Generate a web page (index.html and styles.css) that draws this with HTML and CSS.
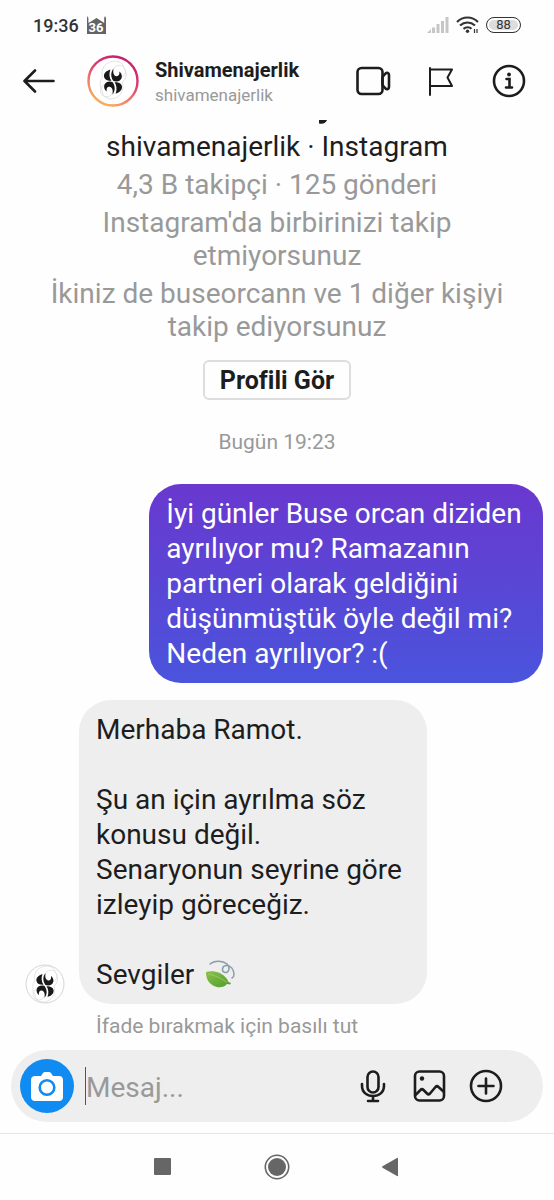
FILE: index.html
```html
<!DOCTYPE html>
<html lang="tr">
<head>
<meta charset="utf-8">
<meta name="viewport" content="width=device-width, initial-scale=1">
<title>Shivamenajerlik</title>
<link rel="stylesheet" href="styles.css">
</head>
<body>
<svg class="defs" aria-hidden="true">
  <defs>
    <linearGradient id="ring" x1="0.75" y1="0" x2="0.25" y2="1">
      <stop offset="0" stop-color="#c51b6b"/>
      <stop offset="0.4" stop-color="#dc3f72"/>
      <stop offset="0.75" stop-color="#f18a62"/>
      <stop offset="1" stop-color="#f8b65a"/>
    </linearGradient>
    <linearGradient id="leaf" x1="0" y1="0" x2="1" y2="1">
      <stop offset="0" stop-color="#8bc34a"/>
      <stop offset="1" stop-color="#4f9a2c"/>
    </linearGradient>
    <symbol id="logo" viewBox="0 0 40 40">
      <g fill="none" stroke="#ddd" stroke-width="0.800">
        <path d="M10 31c-3-5-3-10 0-14-2-7 2-14 11-15 6 0 9 3 9 6 4 5 3 11-1 14 2 8-2 15-10 16-6 0-9-3-9-7z"/>
        <circle cx="26" cy="12" r="6"/>
        <circle cx="14" cy="30" r="6"/>
      </g>
      <g id="half" fill="#191919">
        <path d="M17.500 10C12.500 11.500 11 14.500 11.500 17c0.500 3 3.500 4 7 3.800C16.500 18 16 14 17.500 10z"/>
        <path d="M20.500 9c-0.800 3.500 0 6.500 2 7.300 2.500 0.900 4.200-1.300 3.500-4.300 3 2 3.300 6.500 0.500 8.500-1.800 1.200-4.300 1.200-6 0.500C17.800 17.500 17.500 12.500 20.500 9z"/>
      </g>
      <use href="#half" transform="rotate(180 20 21.500)"/>
    </symbol>
  </defs>
</svg>
<div class="screen">
  <div class="status">
    <span class="clock">19:36</span>
    <svg class="mosque" viewBox="0 0 19 18" role="img" aria-label="36">
      <path d="M0 18V2L0.600 0l0.800 2v5L4 5.500 9.500 2l5.500 3.500 2.200 1.500V2l0.800-2 1 2v16z" fill="#646464"/>
      <text x="9" y="16" text-anchor="middle" class="mosque-text">36</text>
    </svg>
    <span class="spacer"></span>
    <svg class="signal" viewBox="0 0 22 16" fill="#c6c6c6" aria-hidden="true"><path d="M0 16l4-4V16zM5 10.500h3V16H5zM9.500 7h3v9h-3zM14 4h3v12h-3zM18.500 0h3v16h-3z"/></svg>
    <svg class="wifi" viewBox="0 0 24 18" fill="none" stroke="#333" stroke-width="2.200" aria-hidden="true">
      <path d="M1 6c6-6 15-6 21 0M4 9.500c4.500-4 10.500-4 15 0M7.500 12.800c2.500-2 6-2 8 0"/>
      <circle cx="11.500" cy="15.300" r="1.700" fill="#333" stroke="none"/>
      <path d="M18.500 13v4M21 13v4" stroke-width="1.200"/>
    </svg>
    <span class="battery">88</span>
  </div>

  <header class="header">
    <button class="icon-button back" aria-label="Geri">
      <svg width="32" height="26" viewBox="0 0 32 26" fill="none" stroke="#1d1d1d" stroke-width="2.600" stroke-linecap="round" stroke-linejoin="round"><path d="M30.500 13H2M12 2.500L1.500 13 12 23.500"/></svg>
    </button>
    <svg class="avatar-large" viewBox="0 0 52 52" role="img" aria-label="Shivamenajerlik">
      <circle cx="26" cy="26" r="24.500" fill="#fff" stroke="url(#ring)" stroke-width="2.400"/>
      <use href="#logo" x="5" y="4" width="42" height="42"/>
    </svg>
    <div class="names">
      <h1 class="title">Shivamenajerlik</h1>
      <span class="handle">shivamenajerlik</span>
    </div>
    <button class="icon-button" aria-label="Görüntülü ara">
      <svg width="36" height="34" viewBox="0 0 36 34" fill="none" stroke="#1d1d1d" stroke-width="2.600" stroke-linejoin="round"><rect x="2.500" y="4" width="25" height="26" rx="4"/><path d="M27.500 13l3-3.500c1.500-1.200 3.500-0.500 3.500 1.500v12c0 2-2 2.700-3.500 1.500l-3-3.500z"/></svg>
    </button>
    <button class="icon-button" aria-label="İşaretle">
      <svg width="36" height="34" viewBox="0 0 36 34" fill="none" stroke="#1d1d1d" stroke-width="2" stroke-linecap="round" stroke-linejoin="round"><path d="M7 31V4M7 5.500h22l-4.500 8 4.500 8.500H7"/></svg>
    </button>
    <button class="icon-button" aria-label="Bilgi">
      <svg width="36" height="34" viewBox="0 0 36 34" fill="none" stroke="#1d1d1d" stroke-width="2.600" stroke-linecap="round"><circle cx="18" cy="17" r="15"/><path d="M15.500 15H18.500V23.500M15 23.500h6"/><circle cx="18" cy="10.500" r="1.900" fill="#1d1d1d" stroke="none"/></svg>
    </button>
  </header>

  <main class="thread">
    <section class="profile">
      <svg class="tail" viewBox="0 0 554 5" aria-hidden="true"><path d="M319 0h8c-1.200 3-3.500 4.200-8 3.500z" fill="#1d1d1d"/></svg>
      <p class="account">shivamenajerlik · Instagram</p>
      <p>4,3 B takipçi · 125 gönderi</p>
      <p>Instagram'da birbirinizi takip<br>etmiyorsunuz</p>
      <p>İkiniz de buseorcann ve 1 diğer kişiyi<br>takip ediyorsunuz</p>
      <button class="profile-button">Profili Gör</button>
    </section>
    <time class="date">Bugün 19:23</time>
    <p class="bubble sent">İyi günler Buse orcan diziden ayrılıyor mu? Ramazanın partneri olarak geldiğini düşünmüştük öyle değil mi? Neden ayrılıyor? :(</p>
    <div class="received-row">
      <svg class="avatar-small" viewBox="0 0 40 40" role="img" aria-label="Shivamenajerlik"><circle cx="20" cy="20" r="19" fill="#fff" stroke="#d4d4d4"/><use href="#logo" x="0" y="0" width="40" height="40"/></svg>
      <p class="bubble received">Merhaba Ramot.<br><br>Şu an için ayrılma söz konusu değil.<br>Senaryonun seyrine göre izleyip göreceğiz.<br><br>Sevgiler <svg class="leaf" viewBox="0 0 30 28" role="img" aria-label="yaprak"><path d="M1 12c6-2 16-0.500 21 7l1.500 3 2.500 1-1 1.500-3-0.500c-3 3.500-9 4.500-14 1.500-5-3-7-7.500-7-13.500z" fill="url(#leaf)"/><path d="M3 14c6 1 13 4 19 8.500" fill="none" stroke="#a5d36b" stroke-width="0.700"/><path d="M5 4C9 0.500 17 0 22 4c4 4 1.500 9-2 8.500-3.500-0.500-3.500-6.500 1-7C26 5 29 10 29 14.500c0 2-1 3-2 3.500" fill="none" stroke="#8a9fab" stroke-width="1.500" stroke-linecap="round"/></svg></p>
    </div>
    <p class="hint">İfade bırakmak için basılı tut</p>
  </main>

  <form class="composer">
    <button type="button" class="camera" aria-label="Kamera">
      <svg width="32" height="30" viewBox="0 0 32 30"><path d="M4 5h6l2-3c0.700-1 1.500-1 2.500-1h3c1 0 1.800 0 2.500 1l2 3h6c2.500 0 4 1.500 4 4v17c0 2.500-1.500 4-4 4H4c-2.500 0-4-1.500-4-4V9c0-2.500 1.500-4 4-4z" fill="#fff"/><circle cx="16" cy="16.500" r="7.300" fill="none" stroke="#0f8bf2" stroke-width="2.600"/></svg>
    </button>
    <input class="message" type="text" placeholder="Mesaj..." aria-label="Mesaj">
    <button type="button" class="icon-button" aria-label="Ses kaydı">
      <svg width="36" height="36" viewBox="0 0 36 36" fill="none" stroke="#1d1d1d" stroke-width="2.600" stroke-linecap="round"><rect x="11.500" y="3.500" width="11" height="21" rx="5.500"/><path d="M6 16v1.500c0 7 5 10.500 11 10.500s11-3.500 11-10.500V16M17 28v5M12 33h10"/></svg>
    </button>
    <button type="button" class="icon-button" aria-label="Galeri">
      <svg width="36" height="36" viewBox="0 0 36 36" fill="none" stroke="#1d1d1d" stroke-width="2.600" stroke-linejoin="round"><rect x="3" y="3.500" width="29" height="29" rx="4.500"/><path d="M3.500 27l5-5c1-1 2-1 3 0l3.500 3.500c1 1 2 1 3 0L23.500 19c1-1 2-1 3 0l5.500 5"/><circle cx="10" cy="10.500" r="2.200" fill="#1d1d1d" stroke="none"/></svg>
    </button>
    <button type="button" class="icon-button" aria-label="Ekle">
      <svg width="36" height="36" viewBox="0 0 36 36" fill="none" stroke="#1d1d1d" stroke-width="2.600" stroke-linecap="round"><circle cx="18" cy="18" r="15"/><path d="M18 10.500v15M10.500 18h15"/></svg>
    </button>
  </form>

  <nav class="system" aria-label="Sistem">
    <button class="icon-button" aria-label="Son uygulamalar"><svg width="28" height="28" viewBox="0 0 28 28"><rect x="5" y="5" width="17" height="17" rx="1" fill="#666"/></svg></button>
    <button class="icon-button" aria-label="Ana ekran"><svg width="28" height="28" viewBox="0 0 28 28"><circle cx="14" cy="14" r="11.700" fill="none" stroke="#666" stroke-width="1.600"/><circle cx="14" cy="14" r="9" fill="#666"/></svg></button>
    <button class="icon-button" aria-label="Geri"><svg width="28" height="28" viewBox="0 0 28 28"><path d="M5.500 13.300L20 5q1-0.500 1 0.500v17q0 1-1 0.500L5.500 14.700q-1-0.700 0-1.400z" fill="#666"/></svg></button>
  </nav>
</div>
</body>
</html>
```

FILE: styles.css
```css
* {
  box-sizing: border-box;
}

body {
  margin: 0;
  background: #fefefe;
  color: #1d1d1d;
  font-family: Roboto, "Liberation Sans", sans-serif;
}

p,
h1 {
  margin: 0;
}

button {
  padding: 0;
  border: 0;
  background: none;
  color: inherit;
  font-family: inherit;
}

svg {
  display: block;
}

.defs {
  position: absolute;
  width: 0;
  height: 0;
}

.screen {
  display: flex;
  flex-direction: column;
  min-height: 100vh;
}

.status {
  display: flex;
  align-items: center;
  height: 50px;
  padding: 0 33px;
}

.clock {
  font-size: 18px;
  font-weight: 500;
  color: #333;
}

.mosque {
  width: 19px;
  height: 18px;
  margin-left: 8px;
}

.mosque-text {
  font-size: 13px;
  font-weight: 700;
  fill: #fff;
}

.spacer {
  flex: 1;
}

.signal {
  width: 22px;
  height: 16px;
}

.wifi {
  width: 24px;
  height: 18px;
  margin: 0 6px 0 7px;
}

.battery {
  width: 35px;
  border: 1px solid #333;
  border-radius: 8px;
  box-shadow: inset 0 0 0 2px #fff;
  background: #ddd;
  color: #333;
  font-size: 13px;
  line-height: 14px;
  text-align: center;
}

.header {
  display: flex;
  align-items: center;
  gap: 32px;
  height: 62px;
  padding: 0 27px 0 23px;
}

.icon-button {
  flex: none;
}

.avatar-large {
  flex: none;
  width: 52px;
  height: 52px;
}

.names {
  flex: 1;
  margin-left: -16px;
  padding-top: 2px;
}

.title {
  font-size: 20px;
  font-weight: 700;
  line-height: 26px;
}

.handle {
  display: block;
  color: #999;
  font-size: 17px;
  line-height: 24px;
}

.thread {
  display: flex;
  flex: 1;
  flex-direction: column;
  padding: 8px 11px 0;
}

.profile {
  display: flex;
  flex-direction: column;
  align-items: center;
  gap: 5px;
  margin: 0 -11px;
  color: #999;
  font-size: 28px;
  line-height: 33px;
  text-align: center;
}

.tail {
  width: 100%;
  height: 5px;
}

.account {
  color: #1d1d1d;
}

.profile-button {
  height: 40px;
  margin-top: 12px;
  padding: 0 15px;
  border: 2px solid #ddd;
  border-radius: 6px;
  color: #1d1d1d;
  font-size: 25px;
  font-weight: 700;
}

.date {
  margin-top: 28px;
  color: #999;
  font-size: 21px;
  line-height: 28px;
  text-align: center;
}

.bubble {
  padding: 12px 17px;
  border-radius: 32px;
  font-size: 28px;
  line-height: 35px;
}

.sent {
  align-self: flex-end;
  width: 74%;
  margin-top: 28px;
  background: linear-gradient(#6938cf, #4a54dc);
  color: #fff;
}

.received-row {
  display: flex;
  align-items: flex-end;
  gap: 14px;
  margin: 17px 0 0 14px;
}

.avatar-small {
  flex: none;
  width: 40px;
  height: 40px;
}

.received {
  width: 348px;
  background: #eee;
}

.leaf {
  display: inline-block;
  width: 30px;
  height: 28px;
  margin-left: 4px;
  vertical-align: -4px;
}

.hint {
  margin: 9px 0 0 85px;
  color: #999;
  font-size: 21px;
  line-height: 26px;
}

.composer {
  display: flex;
  align-items: center;
  gap: 20px;
  height: 72px;
  margin: 11px 11px;
  padding: 0 39px 0 9px;
  border-radius: 36px;
  background: #eee;
}

.camera {
  display: grid;
  flex: none;
  place-items: center;
  width: 54px;
  height: 54px;
  border-radius: 50%;
  background: #0f8bf2;
}

.message {
  flex: 1;
  min-width: 0;
  height: 38px;
  margin-left: -9px;
  padding: 2px 0 0;
  border: 0;
  border-left: 1px solid #555;
  background: none;
  font-family: inherit;
  font-size: 28px;
}

.message::placeholder {
  color: #999;
}

.system {
  display: flex;
  align-items: center;
  justify-content: center;
  gap: 86px;
  height: 67px;
  border-top: 1px solid #e6e6e6;
}
```
